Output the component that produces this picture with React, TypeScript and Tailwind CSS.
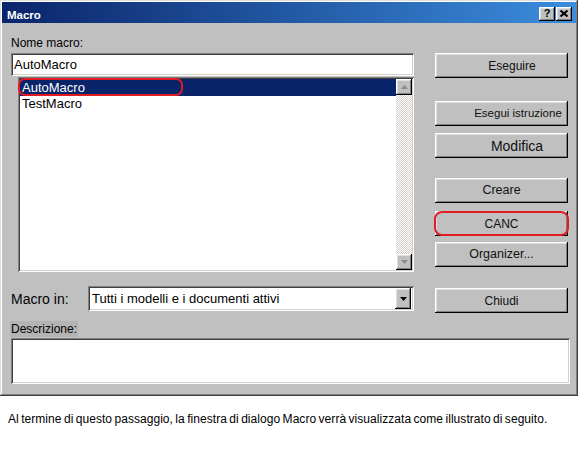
import React from 'react';

// classic 3D bevels
const raised =
  'shadow-[inset_-1px_-1px_#000,inset_1px_1px_#fff,inset_-2px_-2px_#808080,inset_2px_2px_#dfdfdf]';
const sunken =
  'shadow-[inset_1px_1px_#808080,inset_-1px_-1px_#fff,inset_2px_2px_#404040,inset_-2px_-2px_#d4d0c8]';

interface BtnProps {
  label: string;
  className?: string;
  textClass?: string;
}

const Btn: React.FC<BtnProps> = ({ label, className = '', textClass = 'text-[12px]' }) => (
  <div
    className={`flex h-[25px] w-[133px] items-center justify-center bg-[#c0c0c0] text-[#111] ${raised} ${className}`}
  >
    <span className={`whitespace-nowrap leading-none ${textClass}`}>{label}</span>
  </div>
);

const Arrow: React.FC<{ up?: boolean; disabled?: boolean }> = ({ up, disabled }) => (
  <svg width="7" height="4" viewBox="0 0 7 4">
    <path
      d={up ? 'M3.5 0 L7 4 L0 4 Z' : 'M0 0 L7 0 L3.5 4 Z'}
      fill={disabled ? '#8c8c8c' : '#000'}
    />
  </svg>
);

const ScrollBtn: React.FC<{ up?: boolean }> = ({ up }) => (
  <div className={`flex h-[16px] w-[16px] items-center justify-center bg-[#c0c0c0] ${raised}`}>
    <Arrow up={up} disabled />
  </div>
);

export default function App() {
  return (
    <div className="h-[457px] w-[579px] bg-white font-['Liberation_Sans',Arial,sans-serif] text-black">
      {/* dialog window */}
      <div
        className={`flex h-[396px] w-[578px] flex-col bg-[#c0c0c0] p-[2px] shadow-[inset_-1px_-1px_#404040,inset_1px_1px_#dfdfdf,inset_-2px_-2px_#808080,inset_2px_2px_#fff]`}
      >
        {/* title bar */}
        <div className="flex h-[21px] shrink-0 items-center bg-[linear-gradient(to_right,#0a246a,#3b8ddd)] pl-[5px] pr-[4px]">
          <span className="pt-[6px] text-[11.5px] font-bold leading-none text-white">Macro</span>
          <div className="ml-auto mt-[2px] flex gap-[1px]">
            <div className={`flex h-[14px] w-[16px] items-center justify-center bg-[#c0c0c0] ${raised}`}>
              <span className="text-[11px] font-bold leading-none">?</span>
            </div>
            <div className={`flex h-[14px] w-[16px] items-center justify-center bg-[#c0c0c0] ${raised}`}>
              <svg width="8" height="7" viewBox="0 0 8 7">
                <path d="M0.5 0.5 L7.5 6.5 M7.5 0.5 L0.5 6.5" stroke="#000" strokeWidth="2" />
              </svg>
            </div>
          </div>
        </div>

        {/* body */}
        <div className="flex pl-[9px]">
          <div className="w-[403px] pt-[12px]">
            <div className="h-[16px] text-[12px] leading-[16px]">Nome macro:</div>
            <div className={`mt-[2px] h-[23px] bg-white pl-[3px] text-[13px] leading-[24px] ${sunken}`}>
              AutoMacro
            </div>

            {/* macro list */}
            <div className={`relative ml-[7px] mt-[1px] flex h-[195px] bg-white p-[2px] ${sunken}`}>
              <div className="flex-1">
                <div className="h-[17px] bg-[#0a246a] pl-[2px] text-[13px] leading-[17px] text-white">
                  AutoMacro
                </div>
                <div className="h-[16px] pl-[2px] text-[13px] leading-[16px]">TestMacro</div>
              </div>
              <div className="flex w-[16px] flex-col justify-between bg-[repeating-conic-gradient(#ffffff_0%_25%,#d4d0c8_0%_50%)] bg-[length:2px_2px]">
                <ScrollBtn up />
                <ScrollBtn />
              </div>
              <div className="absolute left-0 top-[1px] h-[18px] w-[165px] rounded-[7px] border-2 border-[#e01b24]" />
            </div>

            <div className="mt-[14px] flex h-[25px] items-center">
              <span className="w-[77px] text-[14px] leading-none">Macro in:</span>
              <div className={`flex h-[25px] flex-1 items-center bg-white p-[2px] ${sunken}`}>
                <span className="flex-1 pl-[2px] text-[13px] leading-none">
                  Tutti i modelli e i documenti attivi
                </span>
                <div className={`mr-[1px] flex h-[21px] w-[16px] items-center justify-center bg-[#c0c0c0] ${raised}`}>
                  <Arrow />
                </div>
              </div>
            </div>
          </div>

          {/* command buttons */}
          <div className="ml-[21px] flex w-[133px] flex-col pt-[30px]">
            <Btn label="Eseguire" className="pl-[21px]" textClass="text-[12px]" />
            <Btn label="Esegui istruzione" className="mt-[23px] pl-[33px]" textClass="text-[11.5px]" />
            <Btn label="Modifica" className="mt-[7px] pl-[31px]" textClass="text-[14px]" />
            <Btn label="Creare" className="mt-[20px]" textClass="text-[12.5px]" />
            <div className="relative mt-[8px]">
              <Btn label="CANC" textClass="text-[12px]" />
              <div className="absolute -left-[1px] -right-[1px] top-0 bottom-0 rounded-[8px] border-2 border-[#e01b24]" />
            </div>
            <Btn label="Organizer..." className="mt-[6px]" textClass="text-[12.5px]" />
            <Btn label="Chiudi" className="mt-[21px]" textClass="text-[12px]" />
          </div>
        </div>

        {/* description */}
        <div className="mt-[8px] flex pl-[8px]">
          <span className="h-[16px] bg-[#b4b4b4] px-[1px] text-[12px] leading-[17px]">Descrizione:</span>
        </div>
        <div className={`ml-[9px] mt-[1px] h-[46px] w-[559px] bg-white ${sunken}`} />
      </div>

      <p className="mt-[15px] whitespace-nowrap pl-[8px] text-[12px] leading-[16px] tracking-[0.05px] [word-spacing:-1px]">
        Al termine di questo passaggio, la finestra di dialogo Macro verrà visualizzata come illustrato di seguito.
      </p>
    </div>
  );
}
